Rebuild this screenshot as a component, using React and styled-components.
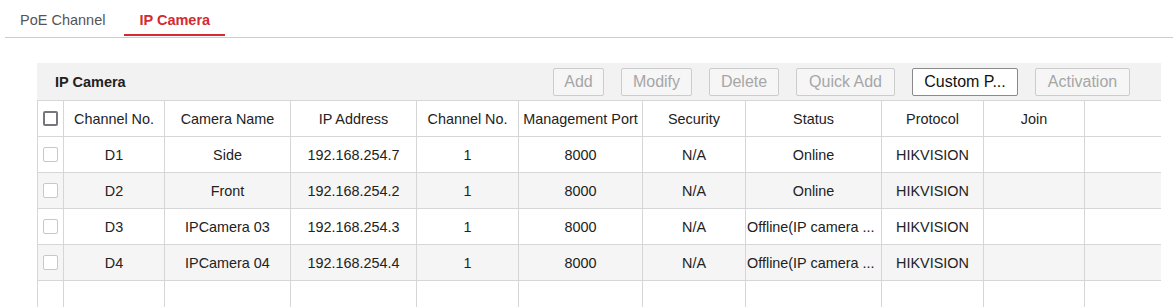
import styled, { createGlobalStyle } from "styled-components";

const GlobalStyle = createGlobalStyle`
    body{
        margin: 0;
        overflow: hidden;
        background: #ffffff;
        font-family: "Liberation Sans", Arial, sans-serif;
    }
`

const columns = [
    { title: "", width: 26 },
    { title: "Channel No.", width: 101 },
    { title: "Camera Name", width: 126 },
    { title: "IP Address", width: 126 },
    { title: "Channel No.", width: 102 },
    { title: "Management Port", width: 124 },
    { title: "Security", width: 103 },
    { title: "Status", width: 136 },
    { title: "Protocol", width: 102 },
    { title: "Join", width: 101 },
    { title: "", width: 77 },
];

const cameras = [
    { ch: "D1", name: "Side", ip: "192.168.254.7", status: "Online" },
    { ch: "D2", name: "Front", ip: "192.168.254.2", status: "Online" },
    { ch: "D3", name: "IPCamera 03", ip: "192.168.254.3", status: "Offline(IP camera ..." },
    { ch: "D4", name: "IPCamera 04", ip: "192.168.254.4", status: "Offline(IP camera ..." },
];

const buttons = [
    { label: "Add", w: 51 },
    { label: "Modify", w: 71 },
    { label: "Delete", w: 70 },
    { label: "Quick Add", w: 99 },
    { label: "Custom P...", w: 106, enabled: true },
    { label: "Activation", w: 95 },
];

export default function App(){
    return(
        <>
        <GlobalStyle />
        <TabBar>
            <Tab>PoE Channel</Tab>
            <Tab $active>IP Camera</Tab>
        </TabBar>
        <Panel>
            <Toolbar>
                <Title>IP Camera</Title>
                <Buttons>
                    {buttons.map((b) => (
                        <Botao key={b.label} $w={b.w} $enabled={b.enabled}>{b.label}</Botao>
                    ))}
                </Buttons>
            </Toolbar>
            <Tabela>
                <colgroup>
                    {columns.map((c, i) => <col key={i} style={{width: c.width}} />)}
                </colgroup>
                <thead>
                    <tr>
                        <Th><Check $strong /></Th>
                        {columns.slice(1).map((c, i) => <Th key={i}>{c.title}</Th>)}
                    </tr>
                </thead>
                <tbody>
                    {cameras.map((c, i) => (
                        <Linha key={c.ch} $gray={i % 2 === 1}>
                            <Td><Check /></Td>
                            <Td>{c.ch}</Td>
                            <Td>{c.name}</Td>
                            <Td>{c.ip}</Td>
                            <Td>1</Td>
                            <Td>8000</Td>
                            <Td>N/A</Td>
                            <Td $left={c.status !== "Online"}>{c.status}</Td>
                            <Td>HIKVISION</Td>
                            <Td></Td>
                            <Td></Td>
                        </Linha>
                    ))}
                    <Linha>
                        {columns.map((c, i) => <Td key={i}></Td>)}
                    </Linha>
                </tbody>
            </Tabela>
        </Panel>
        </>
    )
}

const TabBar = styled.div`
    display: flex;
    gap: 4px;
    margin-left: 5px;
    padding-bottom: 1px;
    border-bottom: 1px solid #cccccc;
`

const Tab = styled.div`
    box-sizing: border-box;
    height: 36px;
    padding: 12px 15px 0 15px;
    font-size: 14.5px;
    font-weight: ${(p) => (p.$active ? 700 : 400)};
    color: ${(p) => (p.$active ? "#d42a33" : "#555555")};
    border-bottom: 2px solid ${(p) => (p.$active ? "#d42a33" : "transparent")};
    cursor: pointer;
`

const Panel = styled.div`
    margin: 25px 0 0 37px;
    width: 1124px;
    height: 244px;
    overflow: hidden;
`

const Toolbar = styled.div`
    height: 37px;
    background-color: #f2f2f2;
    display: flex;
    align-items: center;
    padding: 0 31px 0 18px;
`

const Title = styled.div`
    font-size: 14.5px;
    font-weight: 700;
    color: #222222;
`

const Buttons = styled.div`
    margin-left: auto;
    display: flex;
    gap: 17px;
`

const Botao = styled.div`
    box-sizing: border-box;
    width: ${(p) => p.$w}px;
    height: 28px;
    display: flex;
    justify-content: center;
    align-items: center;
    font-size: 16px;
    white-space: nowrap;
    border-radius: 2px;
    border: 1px solid ${(p) => (p.$enabled ? "#8a8a8a" : "#cccccc")};
    background-color: ${(p) => (p.$enabled ? "#ffffff" : "#f6f6f6")};
    color: ${(p) => (p.$enabled ? "#111111" : "#a6a6a6")};
    cursor: ${(p) => (p.$enabled ? "pointer" : "default")};
`

const Tabela = styled.table`
    width: 1124px;
    table-layout: fixed;
    border-collapse: collapse;
    font-size: 14.4px;
    color: #222222;
`

const Th = styled.th`
    height: 35px;
    padding: 0;
    font-weight: 400;
    text-align: center;
    border: 1px solid #d6d6d6;
    background-color: #ffffff;
`

const Linha = styled.tr`
    background-color: ${(p) => (p.$gray ? "#f5f5f5" : "#ffffff")};
`

const Td = styled.td`
    height: 35px;
    padding: 0 0 0 ${(p) => (p.$left ? "1px" : "0")};
    text-align: ${(p) => (p.$left ? "left" : "center")};
    white-space: nowrap;
    overflow: hidden;
    border: 1px solid #d6d6d6;
`

const Check = styled.span`
    display: block;
    box-sizing: border-box;
    width: 15px;
    height: 15px;
    margin: 0 auto;
    border-radius: 2px;
    border: ${(p) => (p.$strong ? "2px solid #76767e" : "1.5px solid #c8c8c8")};
    background-color: #ffffff;
`
